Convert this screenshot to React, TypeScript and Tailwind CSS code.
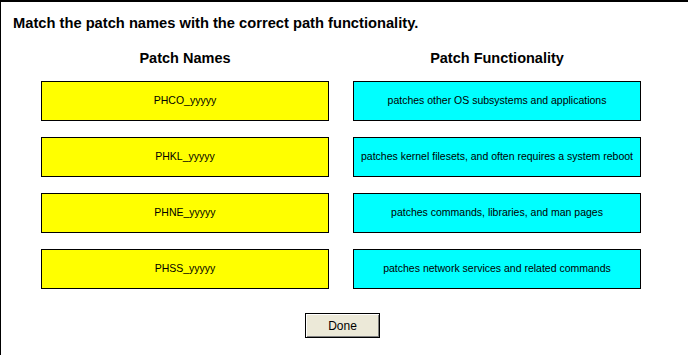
import React from "react";

const names = ["PHCO_yyyyy", "PHKL_yyyyy", "PHNE_yyyyy", "PHSS_yyyyy"];
const funcs = [
  "patches other OS subsystems and applications",
  "patches kernel filesets, and often requires a system reboot",
  "patches commands, libraries, and man pages",
  "patches network services and related commands",
];

export default function App() {
  return (
    <div
      className="w-[688px] h-[355px] overflow-hidden bg-white border-l border-t-2 border-black text-black"
      style={{ fontFamily: '"Liberation Sans", Arial, sans-serif' }}
    >
      <div className="pl-[12px] pt-[13px] text-[14.7px] font-bold leading-[16px]">
        Match the patch names with the correct path functionality.
      </div>
      <div className="flex gap-[24px] pl-[40px] pt-[19px]">
        <div className="flex flex-col w-[288px]">
          <div className="text-center text-[14.5px] font-bold leading-[16px] h-[16px] mb-[15px]">Patch Names</div>
          <div className="flex flex-col gap-[16px]">
            {names.map((n) => (
              <div
                key={n}
                className="h-[40px] bg-[#ffff00] border border-black flex items-center justify-center text-[10.5px]"
              >
                {n}
              </div>
            ))}
          </div>
        </div>
        <div className="flex flex-col w-[288px]">
          <div className="text-center text-[14.5px] font-bold leading-[16px] h-[16px] mb-[15px]">Patch Functionality</div>
          <div className="flex flex-col gap-[16px]">
            {funcs.map((f) => (
              <div
                key={f}
                className="h-[40px] bg-[#00ffff] border border-black flex items-center justify-center text-[10.5px] whitespace-nowrap"
              >
                {f}
              </div>
            ))}
          </div>
        </div>
      </div>
      <div className="flex justify-center pt-[24px] pr-[4px]">
        <button className="w-[75px] h-[25px] bg-[#ece9d8] border border-black text-[12px] shadow-[inset_1px_1px_0_#ffffff,inset_-1px_-1px_0_#808080]">
          Done
        </button>
      </div>
    </div>
  );
}
